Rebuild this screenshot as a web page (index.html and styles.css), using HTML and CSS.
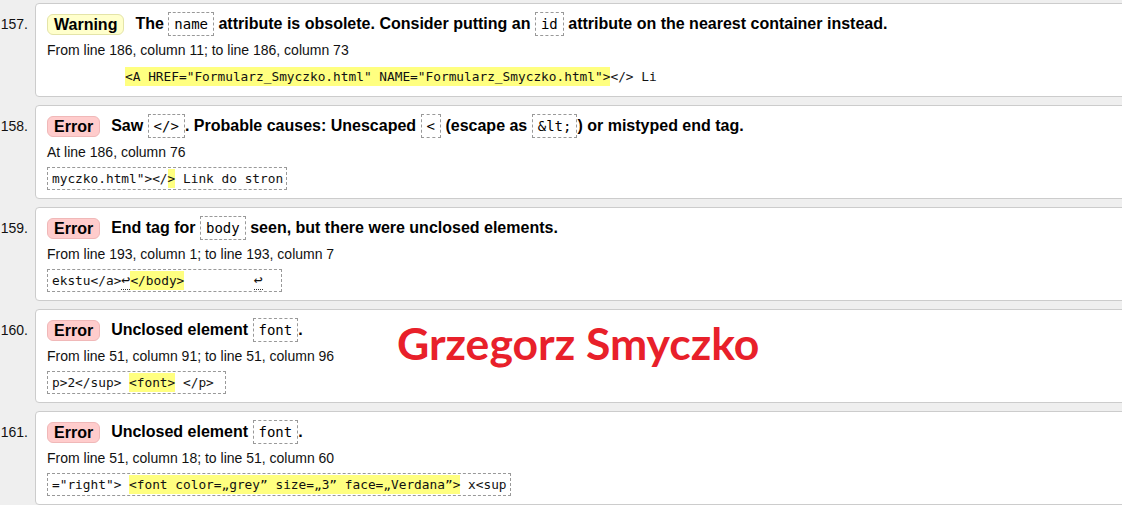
FILE: index.html
```html
<!DOCTYPE html>
<html>
<head>
<meta charset="utf-8">
<link rel="stylesheet" href="styles.css">
</head>
<body>
<ol class="list">
  <li class="item">
    <div class="num">157.</div>
    <div class="card">
      <div class="title"><span class="badge warn">Warning</span>The <code class="c">name</code> attribute is obsolete. Consider putting an <code class="c">id</code> attribute on the nearest container instead.</div>
      <div class="loc">From line 186, column 11; to line 186, column 73</div>
      <div class="ext plain"><span class="x">          </span><mark class="hl">&lt;A HREF="Formularz_Smyczko.html" NAME="Formularz_Smyczko.html"&gt;</mark><span class="x">&lt;/&gt; Li</span></div>
    </div>
  </li>
  <li class="item">
    <div class="num">158.</div>
    <div class="card">
      <div class="title"><span class="badge err">Error</span>Saw <code class="c">&lt;/&gt;</code>. Probable causes: Unescaped <code class="c">&lt;</code> (escape as <code class="c">&amp;lt;</code>) or mistyped end tag.</div>
      <div class="loc">At line 186, column 76</div>
      <div class="ext"><span class="x">myczko.html"&gt;&lt;/</span><mark class="hl">&gt;</mark><span class="x"> Link do stron</span></div>
    </div>
  </li>
  <li class="item">
    <div class="num">159.</div>
    <div class="card">
      <div class="title"><span class="badge err">Error</span>End tag for <code class="c">body</code> seen, but there were unclosed elements.</div>
      <div class="loc">From line 193, column 1; to line 193, column 7</div>
      <div class="ext"><span class="x">ekstu&lt;/a&gt;</span><span class="lf">↩</span><mark class="hl">&lt;/body&gt;</mark><span class="x">         </span><span class="lf">↩</span><span class="x">  </span></div>
    </div>
  </li>
  <li class="item">
    <div class="num">160.</div>
    <div class="card">
      <div class="title"><span class="badge err">Error</span>Unclosed element <code class="c">font</code>.</div>
      <div class="loc">From line 51, column 91; to line 51, column 96</div>
      <div class="ext"><span class="x">p&gt;2&lt;/sup&gt; </span><mark class="hl">&lt;font&gt;</mark><span class="x"> &lt;/p&gt; </span></div>
    </div>
  </li>
  <li class="item">
    <div class="num">161.</div>
    <div class="card">
      <div class="title"><span class="badge err">Error</span>Unclosed element <code class="c">font</code>.</div>
      <div class="loc">From line 51, column 18; to line 51, column 60</div>
      <div class="ext"><span class="x">="right"&gt; </span><mark class="hl">&lt;font color=„grey” size=„3” face=„Verdana”&gt;</mark><span class="x"> x&lt;sup</span></div>
    </div>
  </li>
</ol>
<div class="sign">Grzegorz Smyczko</div>
</body>
</html>
```
FILE: styles.css
```css
html, body {
  margin: 0;
  padding: 0;
  background: #efefef;
  overflow: hidden;
}
body {
  width: 1122px;
  height: 505px;
  position: relative;
  font-family: "Liberation Sans", Arial, sans-serif;
  color: #000;
}
.list {
  list-style: none;
  margin: 0;
  padding: 3px 0 0 0;
  width: 1180px;
  display: flex;
  flex-direction: column;
  gap: 8px;
}
.item {
  display: flex;
  align-items: flex-start;
}
.num {
  width: 28px;
  padding-right: 7px;
  text-align: right;
  font-size: 14px;
  line-height: 24px;
  margin-top: 9px;
  color: #111;
}
.card {
  flex: 1;
  background: #fff;
  border: 1px solid #cccccc;
  border-radius: 4px;
  padding: 8px 11px 8px 11px;
  display: flex;
  flex-direction: column;
}
.title {
  font-weight: bold;
  font-size: 16px;
  line-height: 24px;
  height: 24px;
  white-space: nowrap;
}
.badge {
  display: inline-block;
  line-height: 19px;
  padding: 0 6px;
  border-radius: 6px;
  border: 1px solid;
  margin-right: 11px;
  vertical-align: top;
  margin-top: 2px;
}
.warn {
  background: #ffffcc;
  border-color: #e4e4a8;
}
.err {
  background: #ffcccc;
  border-color: #f0b8b8;
}
.c {
  display: inline-block;
  font-family: "DejaVu Sans Mono", monospace;
  font-weight: normal;
  font-size: 14px;
  line-height: 18px;
  padding: 2px 5px;
  border: 1px dashed #999;
  vertical-align: top;
}
.loc {
  margin-top: 5px;
  font-size: 14px;
  line-height: 18px;
  color: #111;
}
.ext {
  margin-top: 6px;
  align-self: flex-start;
  font-family: "DejaVu Sans Mono", monospace;
  font-size: 12.8px;
  line-height: 17px;
  padding: 2px 3px 2px 4px;
  border: 1px dashed #999;
  white-space: pre;
  color: #111;
}
.ext.plain {
  border-color: transparent;
  padding-left: 0;
}
.hl {
  background: #ffff80;
  color: #111;
  padding: 2px 0;
}
.lf {
  border-bottom: 1px dotted #333;
  font-size: 15px;
}
.sign {
  position: absolute;
  left: 397px;
  top: 314px;
  font-family: Lato, "Open Sans", sans-serif;
  font-weight: 700;
  font-size: 44.5px;
  line-height: 58px;
  color: #e8202a;
  white-space: nowrap;
}
```
